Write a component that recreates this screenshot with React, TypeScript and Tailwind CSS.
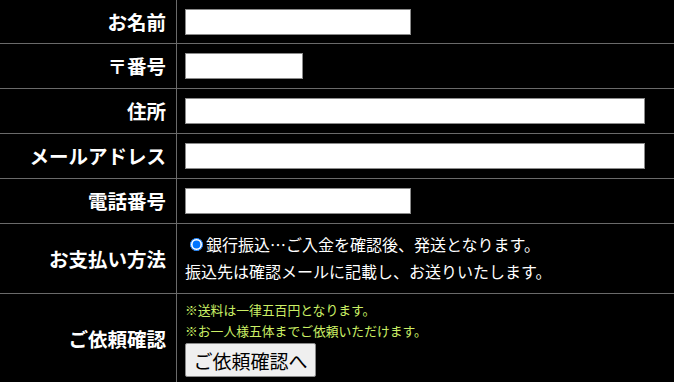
import React from 'react';

const font = { fontFamily: '"Noto Sans CJK JP", "Noto Sans", sans-serif' };

const Row = ({ label, height, children }: { label: string; height: string; children: React.ReactNode }) => (
  <div className={`flex border-b border-[#6a6a6a] ${height}`}>
    <div className="w-[177px] shrink-0 border-r border-[#6a6a6a] flex items-center justify-end pr-[10px]">
      <span className="text-[19.5px] font-bold text-white leading-none">{label}</span>
    </div>
    <div className="flex-1 flex items-center pl-[8px]">{children}</div>
  </div>
);

const Field = ({ width }: { width: string }) => (
  <input type="text" className={`${width} h-[26px] bg-white border border-[#8a8a8a] outline-none`} />
);

export default function App() {
  return (
    <div className="w-[674px] h-[382px] overflow-hidden bg-black" style={font}>
      <Row label="お名前" height="h-[44px]">
        <Field width="w-[226px]" />
      </Row>
      <Row label="〒番号" height="h-[45px]">
        <Field width="w-[118px]" />
      </Row>
      <Row label="住所" height="h-[45px]">
        <Field width="w-[460px]" />
      </Row>
      <Row label="メールアドレス" height="h-[45px]">
        <Field width="w-[460px]" />
      </Row>
      <Row label="電話番号" height="h-[45px]">
        <Field width="w-[226px]" />
      </Row>
      <Row label="お支払い方法" height="h-[70px]">
        <div className="text-white text-[16px] leading-[27px] -mt-[2px]">
          <label className="flex items-center">
            <input type="radio" name="pay" defaultChecked className="ml-[5px] mr-[3px] w-[13px] h-[13px] accent-[#0075ff]" />
            <span>銀行振込…ご入金を確認後、発送となります。</span>
          </label>
          <div>振込先は確認メールに記載し、お送りいたします。</div>
        </div>
      </Row>
      <Row label="ご依頼確認" height="h-[90px]">
        <div className="flex flex-col items-start -mt-[1px]">
          <p className="text-[12.8px] leading-[21px] text-[#ccf066]">※送料は一律五百円となります。</p>
          <p className="text-[12.8px] leading-[21px] text-[#ccf066]">※お一人様五体までご依頼いただけます。</p>
          <button className="mt-[2px] w-[131px] h-[34px] bg-[#efefef] border border-[#8a8a8a] rounded-[2px] text-[19px] text-black leading-none">
            ご依頼確認へ
          </button>
        </div>
      </Row>
    </div>
  );
}
